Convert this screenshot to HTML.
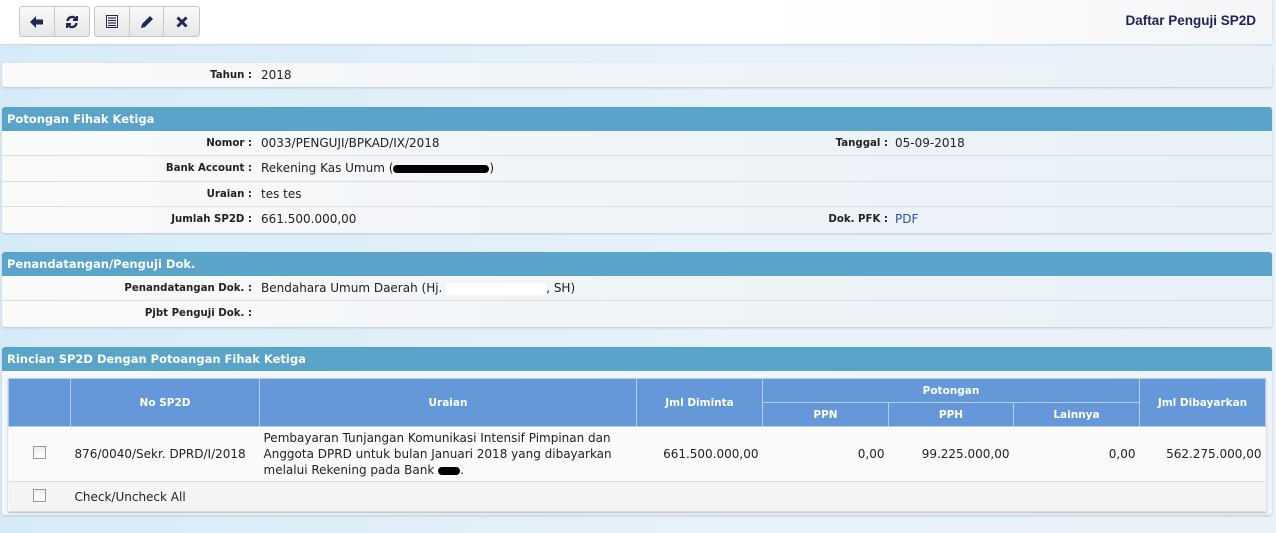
<!DOCTYPE html>
<html><head><style>
*{box-sizing:border-box;margin:0;padding:0}
body{width:1276px;height:533px;overflow:hidden;background:linear-gradient(90deg,#d6ebf8,#e8f2fa 60%,#eaf2f9);font-family:"DejaVu Sans","Liberation Sans",sans-serif;font-size:12px;color:#222;position:relative}
.abs{position:absolute}
.top{left:0;top:0;width:1272px;height:44px;background:linear-gradient(90deg,#fff 60%,#f4f5f7);box-shadow:0 1px 2px #c8d4dc}
.grp{top:6px;height:31px;border:1px solid #c4c8cc;border-radius:3px;background:linear-gradient(#fafafa,#e6e6e6);display:flex}
.grp div{width:35px;height:100%;border-right:1px solid #c8c8c8;display:flex;align-items:center;justify-content:center}
.grp div:last-child{border-right:none}
.title{right:20px;top:13px;font-family:"Liberation Sans",sans-serif;font-weight:bold;font-size:13.5px;color:#1f2158}
.panel{left:2px;width:1270px;background:#f2f6fa;box-shadow:0 1px 2px #b8c8d4;border-radius:3px;overflow:hidden}
.hd{height:24px;background:#5aa4c9;color:#fff;font-weight:bold;padding:5px 0 0 5px;font-size:11.5px}
.row{height:25.4px;border-bottom:1px solid #d9dfe5;background:linear-gradient(90deg,#fafafa,#f0f4f8 50%,#e8f0f8);position:relative}
.row:last-child{border-bottom:none}
.lb{position:absolute;right:1020px;top:7px;font-weight:bold;text-align:right;font-size:10.2px}
.vl{position:absolute;left:259px;top:5px}
.lb2{position:absolute;left:800px;width:86px;top:7px;font-weight:bold;text-align:right;font-size:10.2px}
.vl2{position:absolute;left:893px;top:5px}
.blk{display:inline-block;width:96px;height:8px;background:#000;border-radius:4px;vertical-align:middle}
table{position:absolute;left:6px;top:31px;width:1258px;border-collapse:collapse;box-shadow:0 1px 2px #bbb}
th{background:#6498d8;color:#fff;font-weight:bold;font-size:10.5px;border:1px solid #b8cce8;height:24px}
td{background:#fafafa;border-bottom:1px solid #dcdcdc;padding:0 4px}
.cb{display:inline-block;width:13px;height:13px;border:1px solid #999;background:linear-gradient(#eee,#fff)}
.r{text-align:right}
</style></head><body>
<div class="abs top"></div>
<div class="abs grp" style="left:19px;width:71px">
<div><svg width="14" height="12" viewBox="0 0 14 12"><path d="M0 6L6 0V3.5H13V8.5H6V12Z" fill="#1e2a55"/></svg></div>
<div><svg width="14" height="14" viewBox="0 0 14 14" fill="none" stroke="#1e2a55" stroke-width="2.4"><path d="M2.5 6A4.6 4.6 0 0 1 11 4.2M11.5 8A4.6 4.6 0 0 1 3 9.8"/><path d="M12 1V5H8M2 13V9H6" stroke-width="2"/></svg></div>
</div>
<div class="abs grp" style="left:94px;width:106px">
<div><svg width="12" height="13" viewBox="0 0 12 13"><rect x="0.5" y="0.5" width="11" height="12" fill="#fff" stroke="#1e2a55"/><path d="M2 3H10M2 5.5H10M2 8H10M2 10.5H10" stroke="#1e2a55" stroke-width="1.3"/></svg></div>
<div><svg width="14" height="14" viewBox="0 0 14 14"><path d="M10 1L13 4L5 12L1 13L2 9Z" fill="#1e2a55"/></svg></div>
<div><svg width="12" height="12" viewBox="0 0 12 12"><path d="M1.5 1.5L10.5 10.5M10.5 1.5L1.5 10.5" stroke="#1e2a55" stroke-width="3"/></svg></div>
</div>
<div class="abs title">Daftar Penguji SP2D</div>

<div class="abs panel" style="top:63px;height:24px"><div class="row" style="height:24px"><span class="lb">Tahun :</span><span class="vl">2018</span></div></div>

<div class="abs panel" style="top:107px">
<div class="hd">Potongan Fihak Ketiga</div>
<div class="row"><span class="lb">Nomor :</span><span class="vl">0033/PENGUJI/BPKAD/IX/2018</span><span class="lb2">Tanggal :</span><span class="vl2">05-09-2018</span></div>
<div class="row"><span class="lb">Bank Account :</span><span class="vl">Rekening Kas Umum (<span class="blk"></span>)</span></div>
<div class="row"><span class="lb">Uraian :</span><span class="vl">tes tes</span></div>
<div class="row"><span class="lb">Jumlah SP2D :</span><span class="vl">661.500.000,00</span><span class="lb2">Dok. PFK :</span><span class="vl2" style="color:#2a52a8">PDF</span></div>
</div>

<div class="abs panel" style="top:252px">
<div class="hd">Penandatangan/Penguji Dok.</div>
<div class="row"><span class="lb">Penandatangan Dok. :</span><span class="vl">Bendahara Umum Daerah (Hj. <span style="display:inline-block;width:100px;height:12px;background:#fff;vertical-align:middle"></span>, SH)</span></div>
<div class="row"><span class="lb">Pjbt Penguji Dok. :</span></div>
</div>

<div class="abs panel" style="top:347px;height:168px;background:linear-gradient(90deg,#f4f8fb,#eef3f8)">
<div class="hd">Rincian SP2D Dengan Potoangan Fihak Ketiga</div>
<table>
<tr><th rowspan="2" style="width:62px"></th><th rowspan="2" style="width:189px">No SP2D</th><th rowspan="2" style="width:377px">Uraian</th><th rowspan="2" style="width:126px">Jml Diminta</th><th colspan="3">Potongan</th><th rowspan="2">Jml Dibayarkan</th></tr>
<tr><th style="width:126px">PPN</th><th style="width:125px">PPH</th><th style="width:126px">Lainnya</th></tr>
<tr style="height:55px"><td style="text-align:center"><span class="cb"></span></td><td>876/0040/Sekr. DPRD/I/2018</td><td style="line-height:16px">Pembayaran Tunjangan Komunikasi Intensif Pimpinan dan Anggota DPRD untuk bulan Januari 2018 yang dibayarkan melalui Rekening pada Bank <span class="blk" style="width:22px"></span>.</td><td class="r">661.500.000,00</td><td class="r">0,00</td><td class="r">99.225.000,00</td><td class="r">0,00</td><td class="r">562.275.000,00</td></tr>
<tr style="height:30px"><td style="text-align:center;background:#f4f4f4"><span class="cb"></span></td><td colspan="7" style="background:#f4f4f4">Check/Uncheck All</td></tr>
</table>
</div>
</body></html>
